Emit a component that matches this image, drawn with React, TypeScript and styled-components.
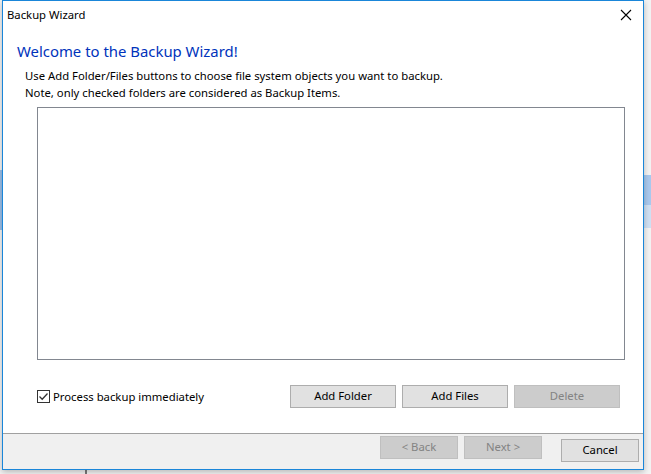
import * as React from 'react';
import styled, { createGlobalStyle } from 'styled-components';

const GlobalStyle = createGlobalStyle`
    html, body {
        margin: 0;
        padding: 0;
        background: #f2f2f2;
    }
    * {
        box-sizing: border-box;
    }
`

const Desktop = styled.div`
    position: relative;
    width: 651px;
    height: 474px;
    overflow: hidden;
    background: #f3f3f3;
    font-family: "Segoe UI", "Noto Sans", "Open Sans", sans-serif;
`

const BackStrip = styled.div<{ top: number; height: number; left: number; width: number; color: string }>`
    position: absolute;
    left: ${p => p.left}px;
    top: ${p => p.top}px;
    width: ${p => p.width}px;
    height: ${p => p.height}px;
    background: ${p => p.color};
`

const Window = styled.div`
    position: absolute;
    left: 2px;
    top: 0;
    width: 642px;
    height: 470px;
    display: flex;
    flex-direction: column;
    background: #ffffff;
    border: 1px solid #1a86d9;
    box-shadow: 0 2px 6px rgba(0, 0, 0, 0.25);
`

const TitleBar = styled.div`
    height: 30px;
    display: flex;
    align-items: center;
    justify-content: space-between;
    padding: 0 0 3px 4px;
    font-size: 11.3px;
    color: #000000;
`

const CloseButton = styled.div`
    width: 34px;
    height: 27px;
    display: flex;
    align-items: center;
    justify-content: center;
`

const Body = styled.div`
    flex: 1;
    display: flex;
    flex-direction: column;
    padding: 10px 18px 0 14px;
`

const Heading = styled.div`
    font-size: 14.9px;
    line-height: 20px;
    color: #0033bb;
    margin-bottom: 6px;
`

const Description = styled.div`
    padding-left: 8px;
    font-size: 11.3px;
    line-height: 17px;
    color: #000000;
    margin-bottom: 6px;
`

const ListBox = styled.div`
    margin-left: 20px;
    height: 253px;
    border: 1px solid #828790;
    background: #ffffff;
`

const ActionRow = styled.div`
    display: flex;
    align-items: center;
    margin: 25px 0 0 20px;
`

const CheckLabel = styled.label`
    display: flex;
    align-items: center;
    gap: 3px;
    font-size: 11.3px;
    color: #000000;
    flex: 1;
`

const CheckBox = styled.span`
    width: 13px;
    height: 13px;
    border: 1px solid #333333;
    background: #ffffff;
    display: flex;
    align-items: center;
    justify-content: center;
`

const ButtonGroup = styled.div`
    display: flex;
    gap: 6px;
    margin-right: 5px;
`

const Button = styled.button<{ disabled?: boolean; w?: number }>`
    width: ${p => p.w || 106}px;
    height: 23px;
    padding: 0 0 2px;
    font-family: inherit;
    font-size: 11.3px;
    color: ${p => p.disabled ? '#838383' : '#000000'};
    background: ${p => p.disabled ? '#cccccc' : '#e1e1e1'};
    border: 1px solid ${p => p.disabled ? '#bfbfbf' : '#adadad'};
`

const Footer = styled.div`
    height: 36px;
    border-top: 1px solid #a0a0a0;
    background: #f0f0f0;
    display: flex;
    align-items: flex-start;
    justify-content: flex-end;
    padding: 2px 4px 0 0;
`

const NavGroup = styled.div`
    display: flex;
    gap: 6px;
    margin-right: 19px;
`

const CancelWrap = styled.div`
    margin-top: 1px;
`

export default function App() {
    return (
        <Desktop>
            <GlobalStyle />
            <BackStrip left={644} top={175} width={7} height={30} color="#a9c9ee" />
            <BackStrip left={644} top={205} width={7} height={23} color="#cfe0f3" />
            <BackStrip left={0} top={170} width={2} height={60} color="#9bbfe9" />
            <BackStrip left={85} top={470} width={2} height={4} color="#7a7a7a" />
            <Window>
                <TitleBar>
                    <span>Backup Wizard</span>
                    <CloseButton>
                        <svg width="12" height="12" viewBox="0 0 12 12">
                            <path d="M1 1 L11 11 M11 1 L1 11" stroke="#000" strokeWidth="1.1" />
                        </svg>
                    </CloseButton>
                </TitleBar>
                <Body>
                    <Heading>Welcome to the Backup Wizard!</Heading>
                    <Description>
                        Use Add Folder/Files buttons to choose file system objects you want to backup.<br />
                        Note, only checked folders are considered as Backup Items.
                    </Description>
                    <ListBox />
                    <ActionRow>
                        <CheckLabel>
                            <CheckBox>
                                <svg width="11" height="11" viewBox="0 0 11 11">
                                    <path d="M1.5 5.5 L4.2 8.2 L9.5 2.5" stroke="#333" strokeWidth="1.3" fill="none" />
                                </svg>
                            </CheckBox>
                            Process backup immediately
                        </CheckLabel>
                        <ButtonGroup>
                            <Button>Add Folder</Button>
                            <Button>Add Files</Button>
                            <Button disabled>Delete</Button>
                        </ButtonGroup>
                    </ActionRow>
                    <div style={{ flex: 1 }} />
                </Body>
                <Footer>
                    <NavGroup>
                        <Button w={78} disabled>&lt; Back</Button>
                        <Button w={78} disabled>Next &gt;</Button>
                    </NavGroup>
                    <CancelWrap>
                        <Button w={78}>Cancel</Button>
                    </CancelWrap>
                </Footer>
            </Window>
        </Desktop>
    )
}
